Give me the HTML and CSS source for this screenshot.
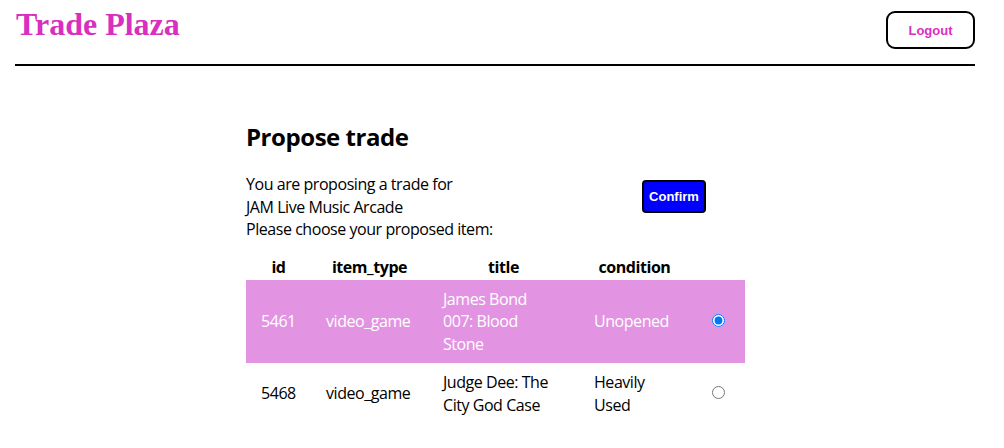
FILE: index.html
```html
<!DOCTYPE html>
<html>
<head>
<meta charset="utf-8">
<link rel="stylesheet" href="styles.css">
</head>
<body>
<header class="topbar">
  <h1 class="brand">Trade Plaza</h1>
  <button class="logout">Logout</button>
</header>
<main class="content">
  <h2 class="page-title">Propose trade</h2>
  <div class="intro">
    <div class="intro-text">
      <div>You are proposing a trade for</div>
      <div>JAM Live Music Arcade</div>
      <div>Please choose your proposed item:</div>
    </div>
    <button class="confirm">Confirm</button>
  </div>
  <table class="items">
    <colgroup>
      <col class="c-id"><col class="c-type"><col class="c-title"><col class="c-cond"><col class="c-pick">
    </colgroup>
    <thead>
      <tr><th>id</th><th>item_type</th><th>title</th><th>condition</th><th></th></tr>
    </thead>
    <tbody>
      <tr class="selected">
        <td>5461</td><td>video_game</td><td class="title">James Bond 007: Blood Stone</td><td>Unopened</td>
        <td class="pick"><input type="radio" name="item" checked></td>
      </tr>
      <tr>
        <td>5468</td><td>video_game</td><td class="title">Judge Dee: The City God Case</td><td>Heavily Used</td>
        <td class="pick"><input type="radio" name="item"></td>
      </tr>
    </tbody>
  </table>
</main>
</body>
</html>
```

FILE: styles.css
```css
html, body {
  margin: 0;
  padding: 0;
  background: #fff;
}

body {
  font-family: "Open Sans", "Noto Sans", sans-serif;
  font-size: 16px;
  letter-spacing: -0.45px;
  color: #000;
}

.topbar {
  width: 960px;
  margin-left: 15px;
  height: 64px;
  border-bottom: 2px solid #000;
  display: flex;
  justify-content: space-between;
  align-items: flex-start;
  letter-spacing: 0;
}

.brand {
  margin: 6px 0 0 1px;
  font-family: "Liberation Serif", serif;
  font-weight: bold;
  font-size: 32px;
  line-height: 37px;
  color: #d92fc0;
}

.logout {
  margin-top: 11px;
  width: 89px;
  height: 38px;
  background: #fff;
  border: 2px solid #000;
  border-radius: 9px;
  font-family: "Liberation Sans", Arial, sans-serif;
  font-weight: bold;
  font-size: 13px;
  color: #d92fc0;
  padding: 0;
}

.content {
  width: 500px;
  margin-left: 246px;
}

.page-title {
  margin: 55px 0 0 0;
  font-size: 24px;
  line-height: 32px;
  font-weight: bold;
}

.intro {
  margin-top: 21px;
  display: flex;
  align-items: flex-start;
}

.intro-text {
  flex: 0 0 396px;
  line-height: 22.5px;
  margin-top: -1px;
}

.confirm {
  margin-top: 6px;
  width: 64px;
  height: 33px;
  background: #0000ff;
  color: #fff;
  border: 2px solid #000;
  border-radius: 4px;
  font-family: "Liberation Sans", Arial, sans-serif;
  font-weight: bold;
  font-size: 13px;
  letter-spacing: 0;
  padding: 0;
}

.items {
  margin-top: 15px;
  width: 499px;
  border-collapse: collapse;
  table-layout: fixed;
  line-height: 22.5px;
}

.c-id { width: 65px; }
.c-type { width: 117px; }
.c-title { width: 151px; }
.c-cond { width: 111px; }
.c-pick { width: 55px; }

.items th {
  font-weight: bold;
  text-align: center;
  padding: 0;
  height: 24px;
}

.items td {
  padding: 8px 15px;
  text-align: left;
  vertical-align: middle;
}

.items td.title {
  padding-right: 28px;
}

.items td.pick {
  padding: 0;
  text-align: center;
}

.items td.pick input {
  margin: 0 0 4px 2px;
}

.items tr.selected {
  background: #e294e2;
  color: #fff;
}
```
